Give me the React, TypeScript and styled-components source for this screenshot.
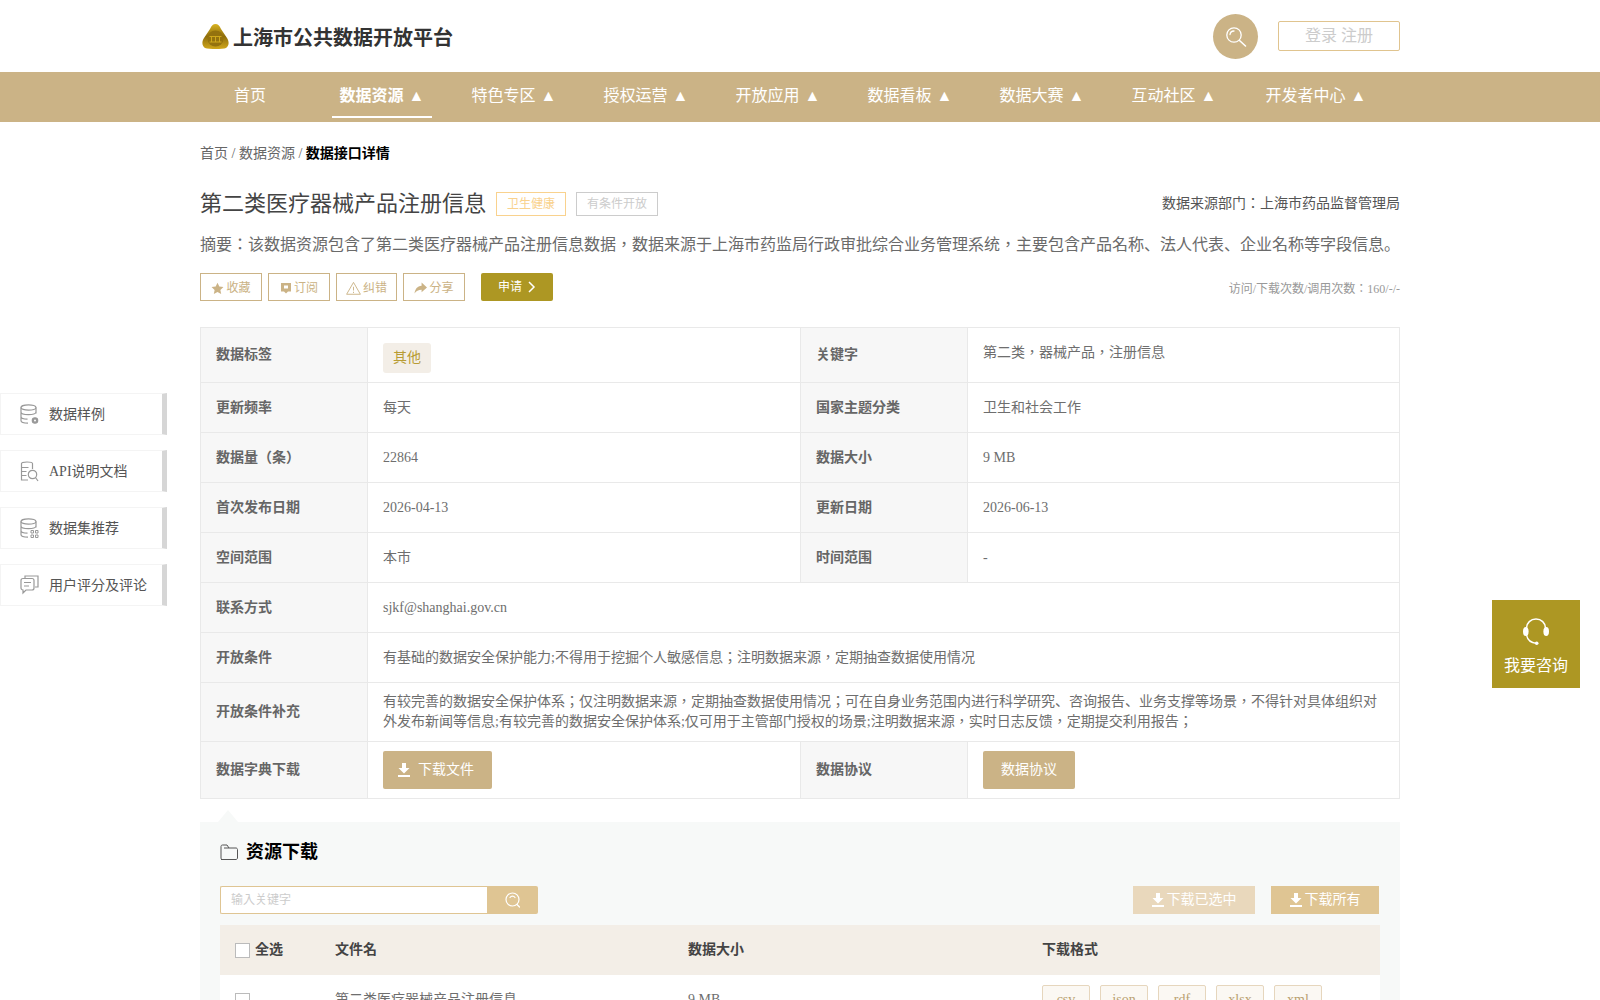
import React from 'react';
import styled, { createGlobalStyle } from 'styled-components';

const gold = '#cbb386';
const olive = '#ad9723';
const lineGrey = '#e9e9e9';

const GlobalStyle = createGlobalStyle`
  html, body {
    margin: 0;
    padding: 0;
    height: 100%;
    overflow: hidden;
    background: #fff;
    font-family: "Liberation Serif", "Noto Sans CJK JP", "Noto Sans CJK SC", serif;
    color: #333;
  }
  * {
    box-sizing: border-box;
  }
`;

const Page = styled.div`
  position: relative;
  width: 1600px;
  height: 1000px;
  overflow: hidden;
`;

const Wrap = styled.div`
  width: 1200px;
  margin: 0 auto;
`;

const Header = styled(Wrap)`
  height: 72px;
  display: flex;
  align-items: center;
`;

const Brand = styled.div`
  display: flex;
  align-items: center;
  gap: 4px;
  padding-left: 2px;
  flex: 1;
`;

const BrandName = styled.span`
  padding-top: 3px;
  font-size: 20px;
  line-height: 30px;
  font-weight: 700;
  color: #333;
`;

const SearchCircle = styled.div`
  width: 45px;
  height: 45px;
  border-radius: 50%;
  background: ${gold};
  display: flex;
  align-items: center;
  justify-content: center;
  margin-right: 20px;
  margin-top: 1px;
`;

const LoginBox = styled.div`
  width: 122px;
  height: 30px;
  border: 1px solid #e0c48f;
  border-radius: 2px;
  font-size: 16px;
  line-height: 28px;
  text-align: center;
  color: #ccc;
`;

const NavBar = styled.div`
  background: ${gold};
  height: 50px;
`;

const NavInner = styled(Wrap)`
  display: flex;
  height: 50px;
`;

const NavItem = styled.div<{ $active?: boolean; $wide?: boolean }>`
  flex: none;
  width: ${p => (p.$wide ? '120px' : '100px')};
  margin-right: 32px;
  height: 46px;
  text-align: center;
  line-height: 46px;
  padding-top: 1px;
  font-size: 16px;
  color: #fff;
  white-space: nowrap;
  font-weight: ${p => (p.$active ? 700 : 400)};
  border-bottom: 2px solid ${p => (p.$active ? '#fff' : 'transparent')};
  &:last-child {
    margin-right: 0;
  }
`;

const NavArrow = styled.span`
  margin-left: 1px;
`;

const Crumbs = styled.div`
  margin-top: 22px;
  font-size: 14px;
  line-height: 20px;
  color: #666;
  b {
    color: #000;
  }
`;

const TitleRow = styled.div`
  display: flex;
  align-items: center;
  margin-top: 25px;
  height: 30px;
`;

const Title = styled.div`
  font-size: 22px;
  line-height: 30px;
  color: #444;
  margin-right: 10px;
`;

const Tag = styled.span<{ $color: string; $text: string }>`
  border: 1px solid ${p => p.$color};
  color: ${p => p.$text};
  height: 24px;
  line-height: 22px;
  font-size: 12px;
  padding: 0 10px;
  margin-right: 10px;
`;

const Dept = styled.div`
  margin-left: auto;
  font-size: 14px;
  line-height: 30px;
  color: #555;
`;

const Abstract = styled.div`
  margin-top: 11px;
  font-size: 16px;
  line-height: 30px;
  color: #6a6a6a;
  white-space: nowrap;
`;

const ActionRow = styled.div`
  display: flex;
  align-items: center;
  gap: 6px;
  margin-top: 13px;
  height: 28px;
`;

const ActionBtn = styled.div<{ $narrow?: boolean }>`
  width: ${p => (p.$narrow ? '61px' : '62px')};
  height: 28px;
  padding-top: 2px;
  border: 1px solid ${gold};
  display: flex;
  align-items: center;
  justify-content: center;
  gap: 2px;
  color: ${gold};
  font-size: 12px;
  line-height: 22px;
`;

const ApplyBtn = styled.div`
  margin-left: 10px;
  width: 72px;
  height: 28px;
  border-radius: 2px;
  background: ${olive};
  color: #fff;
  font-size: 12px;
  line-height: 24px;
  display: flex;
  align-items: center;
  justify-content: center;
  gap: 6px;
  padding-bottom: 1px;
`;

const Visits = styled.div`
  margin-left: auto;
  padding-top: 3px;
  color: #999;
  font-size: 12px;
  line-height: 20px;
`;

const InfoTable = styled.table`
  width: 1199px;
  margin: 26px 0 0 0;
  border-collapse: collapse;
  table-layout: fixed;
  font-size: 14px;
  color: #6e6e6e;
  td, th {
    border: 1px solid ${lineGrey};
    padding: 0 15px;
    text-align: left;
    line-height: 20px;
  }
`;

const Label = styled.th`
  background: #f7f7f7;
  font-weight: 700;
  color: #666;
`;

const Row = styled.tr<{ $h: number }>`
  height: ${p => p.$h}px;
`;

const RaisedCell = styled.td`
  && {
    padding-bottom: 4px;
  }
`;

const CellLine = styled.div`
  white-space: nowrap;
`;

const ThemeChip = styled.span`
  display: inline-block;
  background: #f3eee7;
  color: #b89c34;
  border-radius: 3px;
  padding: 0 10px;
  height: 30px;
  line-height: 30px;
  margin-top: 5px;
`;

const SolidBtn = styled.div<{ $icon?: boolean }>`
  display: inline-flex;
  align-items: center;
  justify-content: center;
  gap: 8px;
  height: 38px;
  padding: ${p => (p.$icon ? '0 18px 0 15px' : '0 18px')};
  background: ${gold};
  color: #fff;
  border-radius: 2px;
  vertical-align: middle;
`;

// the reference draws the full-width comma in the middle of its cell, as the TC cut does
const Comma = styled.span`
  font-family: "Liberation Serif", "Noto Sans CJK TC", serif;
`;

const Resource = styled.div`
  position: relative;
  margin-top: 23px;
  background: #f7f9f8;
  padding: 18px 20px 0;
  &::before {
    content: '';
    position: absolute;
    left: 18px;
    top: -12px;
    border-left: 10px solid transparent;
    border-right: 10px solid transparent;
    border-bottom: 12px solid #f7f9f8;
  }
`;

const ResourceHead = styled.div`
  display: flex;
  align-items: center;
  gap: 8px;
  height: 24px;
  font-size: 18px;
  line-height: 24px;
  font-weight: 700;
  color: #000;
`;

const Toolbar = styled.div`
  display: flex;
  align-items: center;
  margin-top: 22px;
  height: 28px;
`;

const SearchInput = styled.div`
  width: 267px;
  height: 28px;
  background: #fff;
  border: 1px solid #dfc593;
  border-right: none;
  border-radius: 2px 0 0 2px;
  font-size: 12px;
  line-height: 26px;
  padding-left: 10px;
  color: #ccc;
`;

const SearchBtn = styled.div`
  width: 51px;
  height: 28px;
  background: #dfc593;
  border-radius: 0 2px 2px 0;
  display: flex;
  align-items: center;
  justify-content: center;
`;

const DownBtn = styled.div<{ $muted?: boolean; $w: number }>`
  width: ${p => p.$w}px;
  height: 28px;
  background: ${p => (p.$muted ? '#e9d8bc' : '#dfc593')};
  color: #fff;
  font-size: 14px;
  line-height: 26px;
  display: flex;
  align-items: center;
  justify-content: center;
  gap: 3px;
  margin-left: ${p => (p.$muted ? 'auto' : '16px')};
  margin-right: ${p => (p.$muted ? '0' : '1px')};
`;

const FileTable = styled.div`
  margin-top: 11px;
`;

const FileRow = styled.div<{ $head?: boolean }>`
  display: grid;
  grid-template-columns: 100px 353px 354px 353px;
  height: 50px;
  align-items: center;
  background: ${p => (p.$head ? '#f3eee7' : '#fff')};
  font-size: 14px;
  line-height: 20px;
  font-weight: ${p => (p.$head ? 700 : 400)};
  color: ${p => (p.$head ? '#444' : '#6e6e6e')};
`;

const FileCell = styled.div`
  display: flex;
  align-items: center;
  gap: 5px;
  padding-left: 15px;
`;

const Check = styled.span`
  width: 15px;
  height: 15px;
  border: 1px solid #bbb;
  background: #fff;
`;

const ChipList = styled.div`
  display: flex;
  gap: 10px;
`;

const FormatChip = styled.span`
  width: 48px;
  height: 30px;
  border: 1px solid #e6d6bd;
  border-radius: 2px;
  background: #fbf8f3;
  color: #b99f70;
  text-align: center;
  line-height: 28px;
`;

const SideNav = styled.div`
  position: absolute;
  left: 0;
  top: 393px;
  display: flex;
  flex-direction: column;
  gap: 15px;
`;

const SideItem = styled.div`
  width: 167px;
  height: 42px;
  background: #fff;
  border: 1px solid #f4f4f4;
  border-right: 5px solid #d6d6d6;
  display: flex;
  align-items: center;
  padding-left: 19px;
  gap: 10px;
  color: #555;
`;

const SideLabel = styled.span`
  padding-top: 2px;
  font-size: 14px;
  line-height: 20px;
`;

const Consult = styled.div`
  position: absolute;
  left: 1492px;
  top: 600px;
  width: 88px;
  height: 88px;
  background: ${olive};
  color: #fff;
  font-size: 16px;
  line-height: 24px;
  display: flex;
  flex-direction: column;
  align-items: center;
  padding-top: 18px;
  gap: 9px;
`;

const Logo = () => (
  <svg width="27" height="25" viewBox="0 0 27 25">
    <defs>
      <linearGradient id="lg" x1="0" y1="0" x2="0" y2="1">
        <stop offset="0" stopColor="#d9b321" />
        <stop offset="0.5" stopColor="#8f6e0c" />
        <stop offset="1" stopColor="#d0a71b" />
      </linearGradient>
    </defs>
    <path d="M13.500 0C16 0 17.500 1.500 19 5l6 9c2.500 4 2 8-1 10-3 1.300-17 1.300-21 0-3-2-3.500-6-1-10l6-9c1.500-3.500 3-5 5.500-5z" fill="url(#lg)" />
    <circle cx="13.500" cy="14.500" r="8" fill="#94720e" />
    <path d="M7.500 12.500h12M9.500 12.500v5.500M13.500 12.500v5.500M17.500 12.500v5.500M7.500 18h12" stroke="#cfa81c" strokeWidth="1" fill="none" />
  </svg>
);

const GlassIcon = () => (
  <svg width="24" height="24" viewBox="0 0 24 24" fill="none" stroke="#fff" strokeWidth="1.300" strokeLinecap="round">
    <circle cx="10" cy="10" r="7.200" />
    <path d="M6 9.500a4 4 0 0 1 4-3.500" />
    <path d="M15.500 15.500l6 5.500" strokeWidth="1.600" />
  </svg>
);

const RoundGlassIcon = () => (
  <svg width="16" height="16" viewBox="0 0 16 16" fill="none" stroke="#fff" strokeWidth="1.200" strokeLinecap="round">
    <circle cx="7.500" cy="7.500" r="6.500" />
    <path d="M5 5.500a3 3 0 0 1 5 0" />
    <path d="M12 12.500l2.500 2.500" />
  </svg>
);

const StarIcon = () => (
  <svg width="13" height="13" viewBox="0 0 24 24" fill={gold}>
    <path d="M12 1.500l3.300 7 7.700.9-5.700 5.300 1.500 7.600L12 18.500l-6.800 3.800 1.500-7.600L1 9.400l7.700-.9z" />
  </svg>
);

const SubIcon = () => (
  <svg width="12" height="12" viewBox="0 0 24 24" fill={gold}>
    <path fillRule="evenodd" d="M2 2h20v17h-6l-4 4-4-4H2zM8 7h8v6H8z" />
  </svg>
);

const WarnIcon = () => (
  <svg width="15" height="14" viewBox="0 0 24 22" fill="none" stroke={gold} strokeWidth="1.500">
    <path d="M12 2L23 21H1z" />
    <path d="M12 9v6M12 17v2" />
  </svg>
);

const ShareIcon = () => (
  <svg width="13" height="12" viewBox="0 0 24 22" fill={gold}>
    <path d="M14 1l10 9-10 9v-5C8 14 4 16 1 21c1-8 5-13 13-14z" />
  </svg>
);

const ChevronIcon = () => (
  <svg width="8" height="12" viewBox="0 0 8 12" fill="none" stroke="#fff" strokeWidth="1.500">
    <path d="M1 1l5 5-5 5" />
  </svg>
);

const DownloadIcon = () => (
  <svg width="12" height="14" viewBox="0 0 12 14" fill="#fff">
    <path d="M4 0h4v5h3.500L6 10.500.5 5H4zM0 12h12v2H0z" />
  </svg>
);

const FolderIcon = () => (
  <svg width="18" height="16" viewBox="0 0 18 16" fill="none" stroke="#555" strokeWidth="1">
    <path d="M1 14V2.500C1 1.700 1.500 1 2.500 1H7l2 3h7c.7 0 1.500.6 1.500 1.500V14c0 .8-.7 1.500-1.500 1.500H2.500C1.700 15.500 1 14.800 1 14zM4 15.500H1M9 4H4" />
  </svg>
);

const DbIcon = ({ kind }: { kind: 'gear' | 'grid' }) => (
  <svg width="19" height="21" viewBox="0 0 19 21" fill="none" stroke="#999" strokeWidth="1.200">
    <ellipse cx="8.500" cy="3.500" rx="7.500" ry="2.700" />
    <path d="M1 3.500v13c0 1.500 3 2.700 7 2.700M16 3.500v6M1 8c0 1.500 3.300 2.700 7.500 2.700S16 9.500 16 8M1 12.500c0 1.500 3 2.700 6.500 2.700" />
    {kind === 'gear' ? (
      <g>
        <circle cx="15" cy="16.500" r="2.700" fill="#999" stroke="#999" />
        <circle cx="15" cy="16.500" r="1" fill="#fff" stroke="none" />
      </g>
    ) : (
      <path d="M11 12.500h2.500v2.500H11zM15.500 12.500H18v2.500h-2.500zM11 17h2.500v2.500H11zM15.500 17H18v2.500h-2.500z" strokeWidth="1" />
    )}
  </svg>
);

const DocSearchIcon = () => (
  <svg width="19" height="21" viewBox="0 0 19 21" fill="none" stroke="#999" strokeWidth="1.200">
    <path d="M8 19H1.500V2.500C1.500 1.500 3.500 1 7 1s5.500.5 5.500 1.500V8M1.500 6.500h7M1.500 10.500h5M1.500 14.500h5" />
    <circle cx="12.500" cy="13.500" r="4.200" />
    <path d="M15.500 16.500L18 20" />
  </svg>
);

const ChatIcon = () => (
  <svg width="19" height="21" viewBox="0 0 19 21" fill="none" stroke="#999" strokeWidth="1.200">
    <path d="M5 3V1h13v11h-3" />
    <path d="M1 5.500C1 4 2 3.500 3 3.500h9c1.500 0 2 1 2 2V13c0 1-1 2-2 2H6l-3 3v-3c-1 0-2-1-2-2z" />
    <path d="M4 7.500h7M4 11h5" />
  </svg>
);

const HeadsetIcon = () => (
  <svg width="26" height="27" viewBox="0 0 26 27" fill="none">
    <path d="M3.500 10A9.500 9 0 0 1 22.500 10" stroke="#fff" strokeWidth="1.500" />
    <ellipse cx="2.800" cy="13.500" rx="2.800" ry="4.500" fill="#fff" />
    <ellipse cx="23.200" cy="13.500" rx="2.800" ry="4.500" fill="#fff" />
    <path d="M3.500 17c1 5 5 8 10 8.300" stroke="#fff" strokeWidth="1.300" />
    <circle cx="13.700" cy="25.200" r="1.800" fill="#fff" />
  </svg>
);

const withCommas = (text: string) =>
  text.split('，').map((part, i) => (
    <React.Fragment key={i}>
      {i > 0 && <Comma>，</Comma>}
      {part}
    </React.Fragment>
  ));

const navItems = ['数据资源', '特色专区', '授权运营', '开放应用', '数据看板', '数据大赛', '互动社区'];

const sideItems = [
  { label: '数据样例', icon: <DbIcon kind="gear" /> },
  { label: 'API说明文档', icon: <DocSearchIcon /> },
  { label: '数据集推荐', icon: <DbIcon kind="grid" /> },
  { label: '用户评分及评论', icon: <ChatIcon /> }
];

const formats = ['csv', 'json', 'rdf', 'xlsx', 'xml'];

const App: React.FC = () => {
  return (
    <Page>
      <GlobalStyle />
      <Header>
        <Brand>
          <Logo />
          <BrandName>上海市公共数据开放平台</BrandName>
        </Brand>
        <SearchCircle>
          <GlassIcon />
        </SearchCircle>
        <LoginBox>登录 注册</LoginBox>
      </Header>
      <NavBar>
        <NavInner>
          <NavItem>首页</NavItem>
          {navItems.map((name, i) => (
            <NavItem key={name} $active={i === 0}>
              {name}<NavArrow> ▲</NavArrow>
            </NavItem>
          ))}
          <NavItem $wide>开发者中心<NavArrow> ▲</NavArrow></NavItem>
        </NavInner>
      </NavBar>
      <Wrap>
        <Crumbs>
          首页 / 数据资源 / <b>数据接口详情</b>
        </Crumbs>
        <TitleRow>
          <Title>第二类医疗器械产品注册信息</Title>
          <Tag $color="#f9d28e" $text="#f9d28e">卫生健康</Tag>
          <Tag $color="#ccc" $text="#ccc">有条件开放</Tag>
          <Dept>数据来源部门：上海市药品监督管理局</Dept>
        </TitleRow>
        <Abstract>
          {withCommas('摘要：该数据资源包含了第二类医疗器械产品注册信息数据，数据来源于上海市药监局行政审批综合业务管理系统，主要包含产品名称、法人代表、企业名称等字段信息。')}
        </Abstract>
        <ActionRow>
          <ActionBtn><StarIcon />收藏</ActionBtn>
          <ActionBtn><SubIcon />订阅</ActionBtn>
          <ActionBtn $narrow><WarnIcon />纠错</ActionBtn>
          <ActionBtn><ShareIcon />分享</ActionBtn>
          <ApplyBtn>申请<ChevronIcon /></ApplyBtn>
          <Visits>访问/下载次数/调用次数：160/-/-</Visits>
        </ActionRow>
        <InfoTable>
          <colgroup>
            <col width="167" />
            <col width="433" />
            <col width="167" />
            <col width="432" />
          </colgroup>
          <tbody>
            <Row $h={55}>
              <Label>数据标签</Label>
              <td><ThemeChip>其他</ThemeChip></td>
              <Label>关键字</Label>
              <RaisedCell>{withCommas('第二类，器械产品，注册信息')}</RaisedCell>
            </Row>
            <Row $h={50}>
              <Label>更新频率</Label>
              <td>每天</td>
              <Label>国家主题分类</Label>
              <td>卫生和社会工作</td>
            </Row>
            <Row $h={50}>
              <Label>数据量（条）</Label>
              <td>22864</td>
              <Label>数据大小</Label>
              <td>9 MB</td>
            </Row>
            <Row $h={50}>
              <Label>首次发布日期</Label>
              <td>2026-04-13</td>
              <Label>更新日期</Label>
              <td>2026-06-13</td>
            </Row>
            <Row $h={50}>
              <Label>空间范围</Label>
              <td>本市</td>
              <Label>时间范围</Label>
              <td>-</td>
            </Row>
            <Row $h={50}>
              <Label>联系方式</Label>
              <td colSpan={3}>sjkf@shanghai.gov.cn</td>
            </Row>
            <Row $h={50}>
              <Label>开放条件</Label>
              <td colSpan={3}>{withCommas('有基础的数据安全保护能力;不得用于挖掘个人敏感信息；注明数据来源，定期抽查数据使用情况')}</td>
            </Row>
            <Row $h={59}>
              <Label>开放条件补充</Label>
              <td colSpan={3}>
                <CellLine>{withCommas('有较完善的数据安全保护体系；仅注明数据来源，定期抽查数据使用情况；可在自身业务范围内进行科学研究、咨询报告、业务支撑等场景，不得针对具体组织对')}</CellLine>
                <CellLine>{withCommas('外发布新闻等信息;有较完善的数据安全保护体系;仅可用于主管部门授权的场景;注明数据来源，实时日志反馈，定期提交利用报告；')}</CellLine>
              </td>
            </Row>
            <Row $h={57}>
              <Label>数据字典下载</Label>
              <td><SolidBtn $icon><DownloadIcon />下载文件</SolidBtn></td>
              <Label>数据协议</Label>
              <td><SolidBtn>数据协议</SolidBtn></td>
            </Row>
          </tbody>
        </InfoTable>
        <Resource>
          <ResourceHead><FolderIcon />资源下载</ResourceHead>
          <Toolbar>
            <SearchInput>输入关键字</SearchInput>
            <SearchBtn><RoundGlassIcon /></SearchBtn>
            <DownBtn $muted $w={122}><DownloadIcon />下载已选中</DownBtn>
            <DownBtn $w={108}><DownloadIcon />下载所有</DownBtn>
          </Toolbar>
          <FileTable>
            <FileRow $head>
              <FileCell><Check />全选</FileCell>
              <FileCell>文件名</FileCell>
              <FileCell>数据大小</FileCell>
              <FileCell>下载格式</FileCell>
            </FileRow>
            <FileRow>
              <FileCell><Check /></FileCell>
              <FileCell>第二类医疗器械产品注册信息</FileCell>
              <FileCell>9 MB</FileCell>
              <FileCell>
                <ChipList>
                  {formats.map(f => (
                    <FormatChip key={f}>{f}</FormatChip>
                  ))}
                </ChipList>
              </FileCell>
            </FileRow>
          </FileTable>
        </Resource>
      </Wrap>
      <SideNav>
        {sideItems.map(item => (
          <SideItem key={item.label}>
            {item.icon}
            <SideLabel>{item.label}</SideLabel>
          </SideItem>
        ))}
      </SideNav>
      <Consult>
        <HeadsetIcon />
        我要咨询
      </Consult>
    </Page>
  );
};

export default App;
